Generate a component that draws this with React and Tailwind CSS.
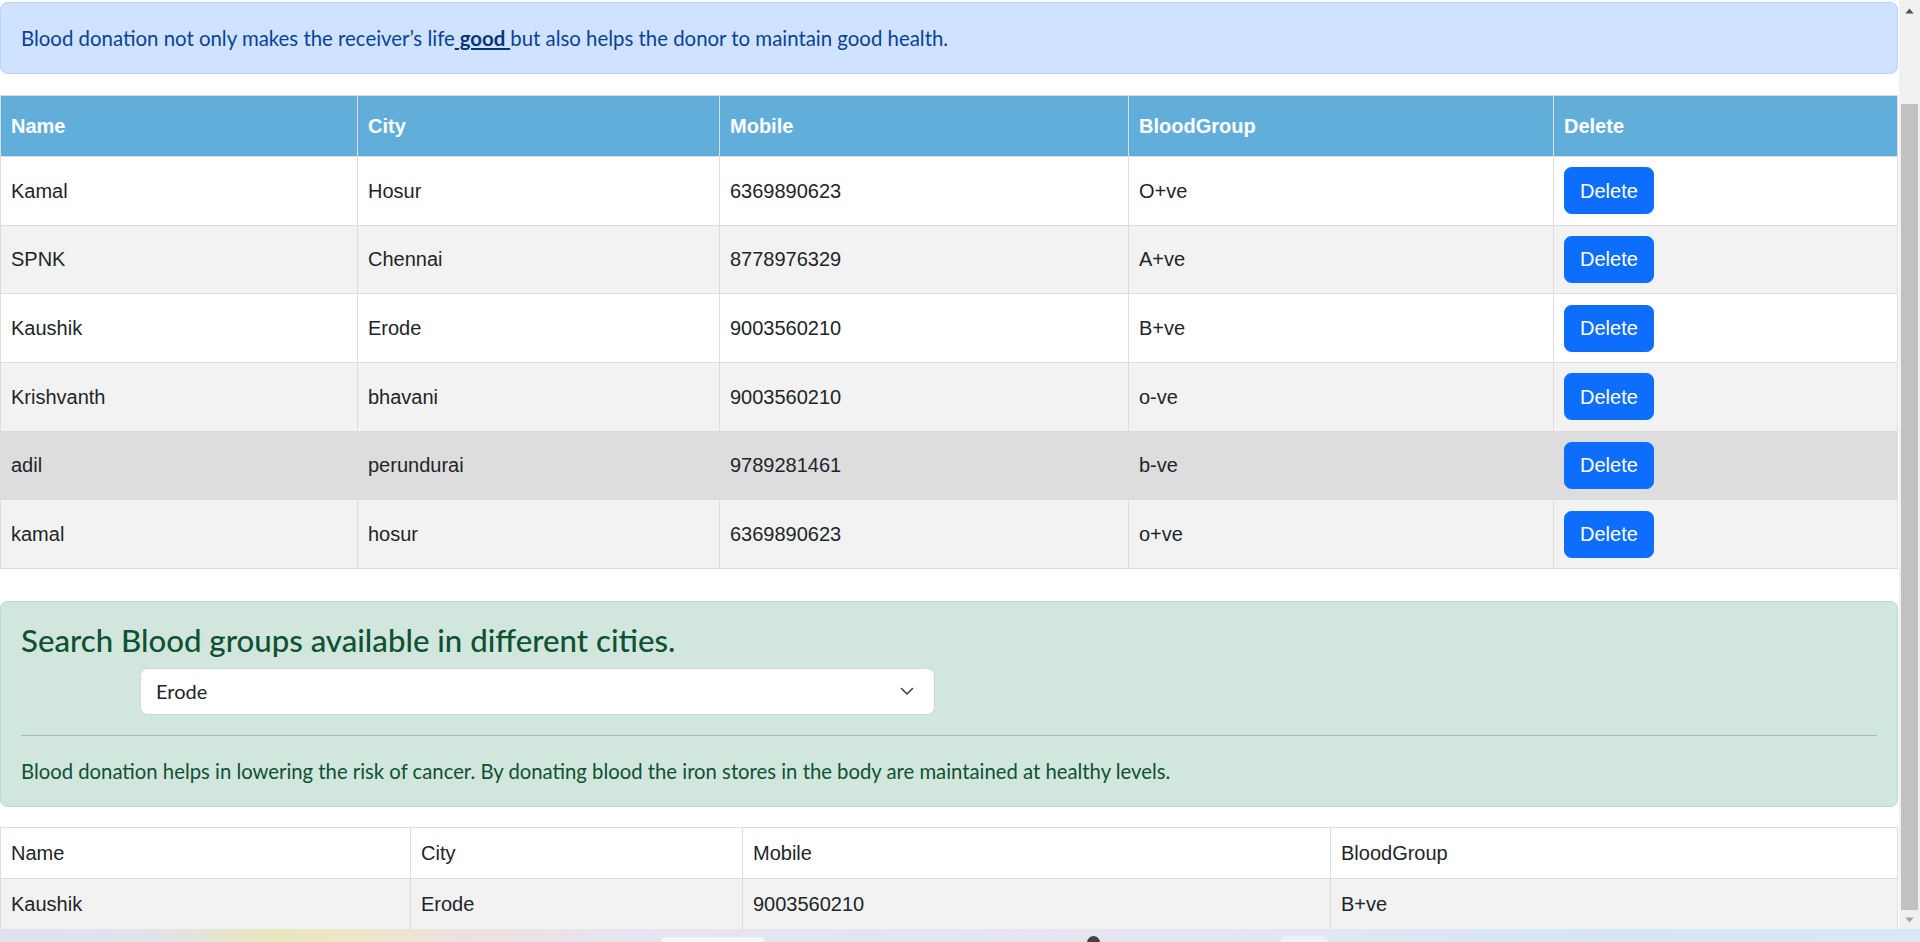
import React from "react";

const donors = [
  { name: "Kamal", city: "Hosur", mobile: "6369890623", group: "O+ve", bg: "bg-white" },
  { name: "SPNK", city: "Chennai", mobile: "8778976329", group: "A+ve", bg: "bg-[#f2f2f2]" },
  { name: "Kaushik", city: "Erode", mobile: "9003560210", group: "B+ve", bg: "bg-white" },
  { name: "Krishvanth", city: "bhavani", mobile: "9003560210", group: "o-ve", bg: "bg-[#f2f2f2]" },
  { name: "adil", city: "perundurai", mobile: "9789281461", group: "b-ve", bg: "bg-[#dddddd]" },
  { name: "kamal", city: "hosur", mobile: "6369890623", group: "o+ve", bg: "bg-[#f2f2f2]" },
];

const uiFont = { fontFamily: "Lato, 'Noto Sans', sans-serif" };
const arial = { fontFamily: "'Liberation Sans', Arial, sans-serif" };

function Scrollbar() {
  return (
    <div className="w-[21px] h-full bg-[#f1f1f1] flex flex-col shrink-0">
      <div className="h-[21px] flex items-center justify-center">
        <svg width="9" height="6" viewBox="0 0 9 6">
          <path d="M0.5 5.5 L4.5 0.5 L8.5 5.5 Z" fill="#505050" />
        </svg>
      </div>
      <div className="mt-[83px] h-[806px] mx-[2px] bg-[#c1c1c1]" />
      <div className="flex-1 flex items-center justify-center">
        <svg width="9" height="6" viewBox="0 0 9 6">
          <path d="M0.5 0.5 L4.5 5.5 L8.5 0.5 Z" fill="#a3a3a3" />
        </svg>
      </div>
    </div>
  );
}

function Taskbar() {
  return (
    <div className="relative h-[13px] w-full bg-[linear-gradient(90deg,#dfe2f0_0%,#e2e3ea_8%,#e8e7bd_14%,#ece7c6_18%,#efe0df_24%,#e6e4ee_32%,#e2e5f1_45%,#e6e4ef_55%,#e0e6f2_70%,#d6e6f4_85%,#d9e8f5_100%)]">
      <div className="absolute left-[661px] top-[8px] w-[104px] h-[8px] rounded-t-[5px] bg-[#f7f7fa]" />
      <div className="absolute left-[1087px] top-[7px] w-[13px] h-[8px] rounded-t-full bg-[#4a4040]" />
      <div className="absolute left-[1280px] top-[7px] w-[48px] h-[8px] rounded-t-[5px] bg-[#eef2f8]" />
    </div>
  );
}

export default function App() {
  return (
    <div className="w-[1920px] h-[942px] overflow-hidden flex flex-col bg-white">
      <div className="flex h-[929px]">
        <main className="w-[1899px] pr-[1px] shrink-0">
          <div
            className="mt-[2px] mb-[21px] border border-[#b6d4fe] bg-[#cfe2ff] text-[#084298] rounded-[7.5px] p-[20px] text-[20.4px] leading-[30px]"
            style={uiFont}
          >
            Blood donation not only makes the receiver’s life
            <a className="font-bold underline text-[#06357a]"> good </a>
            but also helps the donor to maintain good health.
          </div>

          <table className="w-full border-collapse text-[20px] leading-[30px] text-[#212529]" style={arial}>
            <colgroup>
              <col className="w-[357px]" />
              <col className="w-[362px]" />
              <col className="w-[409px]" />
              <col className="w-[425px]" />
              <col />
            </colgroup>
            <thead>
              <tr className="bg-[#62aedb] text-white">
                {["Name", "City", "Mobile", "BloodGroup", "Delete"].map((h) => (
                  <th key={h} className="border border-[#dddddd] pt-[15px] pb-[15px] px-[10px] text-left font-bold">
                    {h}
                  </th>
                ))}
              </tr>
            </thead>
            <tbody>
              {donors.map((d) => (
                <tr key={d.name} className={d.bg}>
                  {[d.name, d.city, d.mobile, d.group].map((v, i) => (
                    <td key={i} className="border border-[#dddddd] p-[10px]">
                      <div className="h-[47.67px] flex items-center">{v}</div>
                    </td>
                  ))}
                  <td className="border border-[#dddddd] p-[10px]">
                    <div className="h-[47.67px] flex items-center">
                      <button className="h-[47px] px-[15px] rounded-[7.5px] bg-[#0d6efd] border border-[#0d6efd] text-white text-[20px] leading-[30px]">
                        Delete
                      </button>
                    </div>
                  </td>
                </tr>
              ))}
            </tbody>
          </table>

          <div
            className="mt-[32px] mb-[20px] border border-[#badbcc] bg-[#d1e7dd] text-[#0f5132] rounded-[7.5px] p-[20px]"
            style={uiFont}
          >
            <h4 className="text-[31.2px] leading-[36px] font-medium mb-[10px]">
              Search Blood groups available in different cities.
            </h4>
            <div className="ml-[119px] w-[795px] h-[47px] bg-white border border-[#ced4da] rounded-[7.5px] pl-[15px] pr-[20px] flex items-center justify-between text-[20px] text-[#212529]">
              <span>Erode</span>
              <svg width="14" height="10" viewBox="0 0 14 10" fill="none">
                <path d="M1.5 2.5 L7 8 L12.5 2.5" stroke="#343a40" strokeWidth="1.5" strokeLinecap="round" strokeLinejoin="round" />
              </svg>
            </div>
            <hr className="my-[20px] border-t border-[#0f5132]/25" />
            <p className="text-[20.3px] leading-[30px]">
              Blood donation helps in lowering the risk of cancer. By donating blood the iron stores in the body are maintained at healthy levels.
            </p>
          </div>

          <table className="w-full border-collapse text-[20px] leading-[30px] text-[#212529]" style={arial}>
            <colgroup>
              <col className="w-[410px]" />
              <col className="w-[332px]" />
              <col className="w-[588px]" />
              <col />
            </colgroup>
            <tbody>
              <tr className="bg-white">
                {["Name", "City", "Mobile", "BloodGroup"].map((h) => (
                  <td key={h} className="border border-[#dddddd] p-[10px]">{h}</td>
                ))}
              </tr>
              <tr className="bg-[#f2f2f2]">
                {["Kaushik", "Erode", "9003560210", "B+ve"].map((h) => (
                  <td key={h} className="border border-[#dddddd] p-[10px]">{h}</td>
                ))}
              </tr>
            </tbody>
          </table>
        </main>
        <Scrollbar />
      </div>
      <Taskbar />
    </div>
  );
}
